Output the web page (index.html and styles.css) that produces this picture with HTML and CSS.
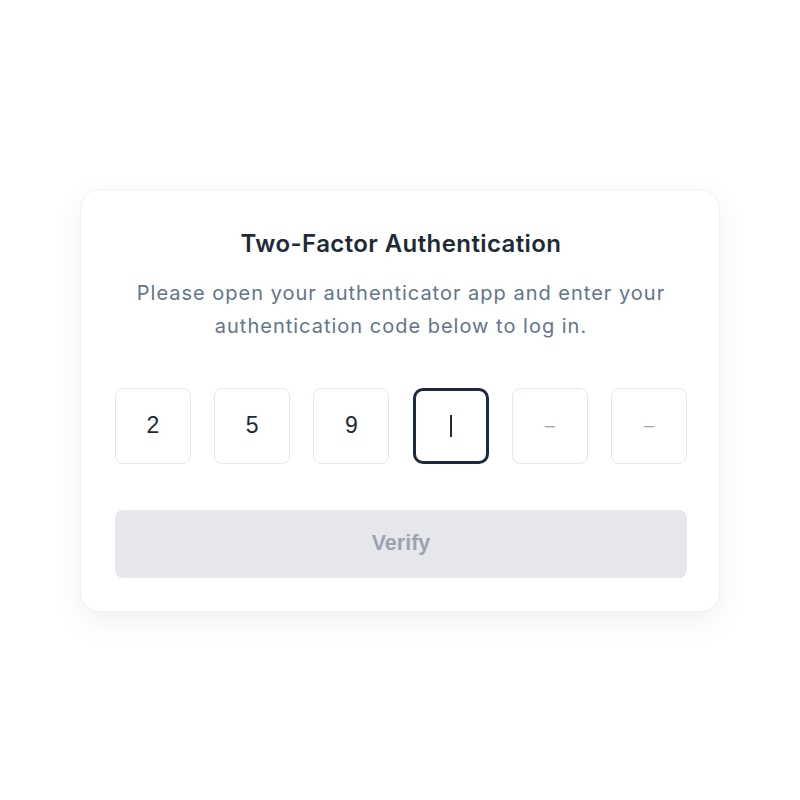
FILE: index.html
```html
<!DOCTYPE html>
<html>
<head>
<meta charset="utf-8">
<link rel="stylesheet" href="styles.css">
</head>
<body>
<div class="page">
  <div class="card">
    <h1 class="title">Two-Factor Authentication</h1>
    <p class="desc">Please open your authenticator app and enter your authentication code below to log in.</p>
    <div class="code">
      <div class="cell">2</div>
      <div class="cell">5</div>
      <div class="cell">9</div>
      <div class="cell active"><span class="caret"></span></div>
      <div class="cell empty">–</div>
      <div class="cell empty">–</div>
    </div>
    <button class="verify">Verify</button>
  </div>
</div>
</body>
</html>
```
FILE: styles.css
```css
html, body { margin: 0; padding: 0; background: #ffffff; }
.page {
  width: 800px; height: 800px;
  display: flex; align-items: center; justify-content: center;
}
.card {
  width: 640px; box-sizing: border-box;
  padding: 34px 32px 33px 34px;
  border: 1px solid #f1f2f4;
  border-radius: 20px;
  background: #fff;
  box-shadow: 0 10px 30px rgba(15, 23, 42, 0.06);
  display: flex; flex-direction: column;
}
.title {
  margin: 0;
  font-family: Inter, "Liberation Sans", sans-serif;
  font-weight: 600; font-size: 24px; line-height: 40px;
  color: #1f2a37; text-align: center; letter-spacing: 0.4px;
}
.desc {
  margin: 13px 0 0;
  font-family: Inter, "Liberation Sans", sans-serif;
  font-size: 20px; line-height: 33px;
  color: #64748b; text-align: center; letter-spacing: 1px;
}
.code {
  margin-top: 45px;
  display: flex; justify-content: space-between;
}
.cell {
  width: 76px; height: 76px; box-sizing: border-box;
  border: 1.5px solid #e5e7eb; border-radius: 8px;
  display: flex; align-items: center; justify-content: center;
  font-family: "Liberation Sans", Arial, sans-serif;
  font-size: 23px; color: #1f2937;
}
.cell.active { border: 3px solid #1e293b; border-radius: 10px; }
.caret { width: 2px; height: 22px; background: #1f2937; }
.cell.empty { color: #94a3b8; font-size: 18px; }
.verify {
  margin-top: 46px;
  height: 68px; border: 0; border-radius: 8px;
  background: #e5e7eb; color: #9ca3af;
  font-family: "Liberation Sans", Arial, sans-serif;
  font-weight: 700; font-size: 21.5px;
}
```
